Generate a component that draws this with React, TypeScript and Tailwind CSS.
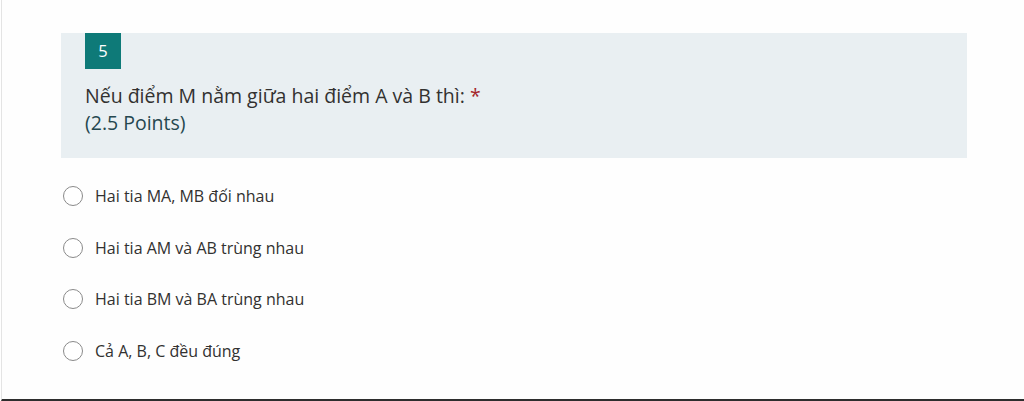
export default function App() {
  const options = [
    "Hai tia MA, MB đối nhau",
    "Hai tia AM và AB trùng nhau",
    "Hai tia BM và BA trùng nhau",
    "Cả A, B, C đều đúng",
  ]

  return (
    <div className="h-[401px] w-[1024px] overflow-hidden bg-white pl-px" style={{ fontFamily: '"Open Sans", "Noto Sans", sans-serif' }}>
      <div className="h-full border-l border-b-2 border-l-[#e4e4e4] border-b-[#2d2d2d] bg-[#fefefe] pt-[33px]">
        <div className="ml-[59px] w-[906px] bg-[#e9eff2] px-6 pb-[22px]">
          <div className="flex h-9 w-9 items-center justify-center bg-[#0e7a78] text-[16.5px] text-white">5</div>
          <div className="mt-[13px] text-[19.5px] leading-[27px] text-[#323130]">
            Nếu điểm M nằm giữa hai điểm A và B thì: <span className="text-[#a4262c]">*</span>
          </div>
          <div className="text-[19.5px] leading-[27px] text-[#25474f]">(2.5 Points)</div>
        </div>

        <div className="ml-[61px] mt-[28px] flex flex-col gap-[31.7px]">
          {options.map((label) => (
            <label key={label} className="flex h-5 items-center gap-3">
              <span className="h-5 w-5 rounded-full border border-[#8a8a8a] bg-white" />
              <span className="text-[16px] text-[#323130]">{label}</span>
            </label>
          ))}
        </div>
      </div>
    </div>
  )
}
